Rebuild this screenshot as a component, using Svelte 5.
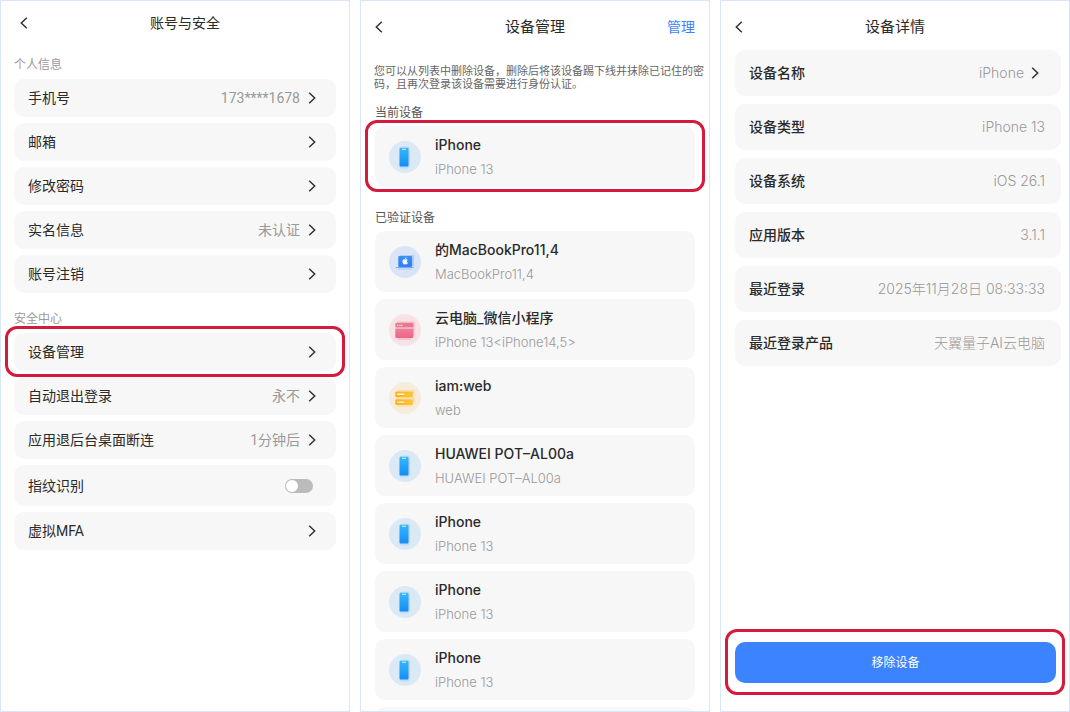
<script>
  const personal = [
    { label: '手机号', value: '173****1678' },
    { label: '邮箱' },
    { label: '修改密码' },
    { label: '实名信息', value: '未认证' },
    { label: '账号注销' }
  ];
  const security = [
    { label: '设备管理', marked: true },
    { label: '自动退出登录', value: '永不' },
    { label: '应用退后台桌面断连', value: '1分钟后' },
    { label: '指纹识别', toggle: true },
    { label: '虚拟MFA' }
  ];
  const current = [{ name: 'iPhone', model: 'iPhone 13', kind: 'phone' }];
  const verified = [
    { name: '的MacBookPro11,4', model: 'MacBookPro11,4', kind: 'laptop' },
    { name: '云电脑_微信小程序', model: 'iPhone 13<iPhone14,5>', kind: 'app' },
    { name: 'iam:web', model: 'web', kind: 'web' },
    { name: 'HUAWEI POT–AL00a', model: 'HUAWEI POT–AL00a', kind: 'phone' },
    { name: 'iPhone', model: 'iPhone 13', kind: 'phone' },
    { name: 'iPhone', model: 'iPhone 13', kind: 'phone' },
    { name: 'iPhone', model: 'iPhone 13', kind: 'phone' },
    { name: 'iPhone', model: 'iPhone 13', kind: 'phone' }
  ];
  const details = [
    { label: '设备名称', value: 'iPhone', editable: true },
    { label: '设备类型', value: 'iPhone 13' },
    { label: '设备系统', value: 'iOS 26.1' },
    { label: '应用版本', value: '3.1.1' },
    { label: '最近登录', value: '2025年11月28日 08:33:33' },
    { label: '最近登录产品', value: '天翼量子AI云电脑' }
  ];
  let fingerprint = $state(false);
</script>

{#snippet chevron()}
  <svg class="chevron" viewBox="0 0 8 12" aria-hidden="true"><path d="M1.2 .7 6.7 6 1.2 11.3" /></svg>
{/snippet}

{#snippet back()}
  <button class="back" aria-label="返回">
    <svg class="chevron" viewBox="0 0 8 12" aria-hidden="true"><path d="M6.8 .7 1.3 6l5.5 5.3" /></svg>
  </button>
{/snippet}

{#snippet settings(items)}
  <ul class="settings">
    {#each items as item}
      <li class:marked={item.marked}>
        {#if item.toggle}
          <label class="row tall">
            <span>{item.label}</span>
            <input class="switch" type="checkbox" role="switch" bind:checked={fingerprint} />
          </label>
        {:else}
          <button class="row">
            <span>{item.label}</span>
            {#if item.value}<span class="value">{item.value}</span>{/if}
            {@render chevron()}
          </button>
        {/if}
      </li>
    {/each}
  </ul>
{/snippet}

{#snippet devices(items, marked)}
  <ul class="devices">
    {#each items as d}
      <li class:marked>
        <button class="device">
          <svg class="badge" viewBox="0 0 32 32" aria-hidden="true">
            {#if d.kind === 'phone'}
              <circle cx="16" cy="16" r="16" fill="#dbe9f4" />
              <rect x="11.5" y="5.5" width="9.500" height="19" rx="1.5" fill="#8cc8f8" opacity=".3" />
              <rect x="10.5" y="8" width="10" height="19.500" rx="2" fill="#9dcbf5" opacity=".4" />
              <rect x="10.5" y="6.700" width="9" height="18.800" rx="1" fill="url(#phoneFill)" />
              <rect x="13" y="7.800" width="4" height="1" rx=".5" fill="#e4f5ff" />
            {:else if d.kind === 'laptop'}
              <circle cx="16" cy="16" r="16" fill="#d9e5f6" />
              <rect x="11" y="9" width="14" height="11" rx="1" fill="#93b9f8" opacity=".6" />
              <rect x="9" y="21" width="14" height="3" rx="1" fill="#a9c8f7" opacity=".5" />
              <rect x="9.3" y="10" width="13.7" height="11" rx="1" fill="url(#laptopFill)" />
              <path d="M6.4 21h18.8l-1 1.1H7.4z" fill="#78a9fa" />
              <path d="M16.2 13.7c-.8-.5-2-.5-2.5.4-.7 1.200.1 4.300 1.300 4.300.5 0 .7-.3 1.200-.3s.7.3 1.200.3c.7 0 1.300-1 1.500-1.800-1.200-.5-1.200-2.100-.1-2.700-.6-.8-1.700-.7-2.600-.2zM16 13.200c-.1-1 .6-1.800 1.600-2 .1 1.100-.6 1.900-1.600 2z" fill="#f2f7ff" />
            {:else if d.kind === 'app'}
              <circle cx="16" cy="16" r="16" fill="#f8e2e5" />
              <path d="M8 7.500h17.500V22H24V9H8z" fill="#f3a9b9" opacity=".7" />
              <rect x="9" y="23" width="13" height="3" rx="1" fill="#f5bcc7" opacity=".7" />
              <rect x="6.300" y="9" width="18" height="4.500" rx=".8" fill="#ee7592" />
              <path d="M6.300 14.500h18V23q0 1-1 1h-16q-1 0-1-1z" fill="url(#appFill)" />
              <path d="M8 11.300h1M9.700 11.300h1M11.400 11.300h2" stroke="#fff" stroke-width="1" />
            {:else}
              <circle cx="16" cy="16" r="16" fill="#f5ecdb" />
              <path d="M9 8h16.500v4H24V9.300H9zM24 14.500h1.500v5.500H24z" fill="#fbd58a" opacity=".7" />
              <rect x="7.500" y="15" width="16.500" height="2" fill="#fde0a2" opacity=".8" />
              <rect x="8" y="23" width="15" height="2" fill="#fde0a2" opacity=".7" />
              <rect x="6.300" y="9.500" width="17.700" height="5.700" rx="1" fill="url(#webFill)" />
              <rect x="6.300" y="17.300" width="17.700" height="5.700" rx="1" fill="url(#webFill)" />
              <path d="M8.700 12.300h6M8.700 20.100h6" stroke="#fff6df" stroke-width="1.400" stroke-linecap="round" />
            {/if}
          </svg>
          <span class="info">
            <span class="name">{d.name}</span>
            <span class="model">{d.model}</span>
          </span>
        </button>
      </li>
    {/each}
  </ul>
{/snippet}

<svg class="defs" width="0" height="0" aria-hidden="true">
  <defs>
    <linearGradient id="phoneFill" x1="0" y1="0" x2="0" y2="1"><stop stop-color="#37b8fb" /><stop offset="1" stop-color="#168cf5" /></linearGradient>
    <linearGradient id="laptopFill" x1="0" y1="0" x2="0" y2="1"><stop stop-color="#3d8df8" /><stop offset="1" stop-color="#2f7ff8" /></linearGradient>
    <linearGradient id="appFill" x1="0" y1="0" x2="0" y2="1"><stop stop-color="#ef7f99" /><stop offset="1" stop-color="#ec6585" /></linearGradient>
    <linearGradient id="webFill"><stop stop-color="#ffb01f" /><stop offset="1" stop-color="#fdc544" /></linearGradient>
  </defs>
</svg>

<main>
  <section class="screen account">
    <header>
      {@render back()}
      <h2>账号与安全</h2>
    </header>
    <h3>个人信息</h3>
    {@render settings(personal)}
    <h3>安全中心</h3>
    {@render settings(security)}
  </section>

  <section class="screen manage">
    <header>
      {@render back()}
      <h2>设备管理</h2>
      <button class="edit">管理</button>
    </header>
    <p>您可以从列表中删除设备，删除后将该设备踢下线并抹除已记住的密码，且再次登录该设备需要进行身份认证。</p>
    <h3>当前设备</h3>
    {@render devices(current, true)}
    <h3>已验证设备</h3>
    {@render devices(verified, false)}
  </section>

  <section class="screen detail">
    <header>
      {@render back()}
      <h2>设备详情</h2>
    </header>
    <dl>
      {#each details as d}
        <div>
          <dt>{d.label}</dt>
          <dd>{d.value}{#if d.editable}{@render chevron()}{/if}</dd>
        </div>
      {/each}
    </dl>
    <div class="action marked"><button>移除设备</button></div>
  </section>
</main>

<style>
  :global(body) {
    margin: 0;
    background: #fff;
  }
  main {
    display: grid;
    grid-template-columns: repeat(3, minmax(0, 1fr));
    gap: 10px;
    height: 100vh;
    color: #2a2a2a;
    font-family: Inter, "Noto Sans CJK SC", sans-serif;
    font-size: 14px;
    line-height: 20px;
  }
  .defs {
    position: absolute;
  }
  .screen {
    display: flex;
    flex-direction: column;
    box-sizing: border-box;
    min-height: 0;
    padding: 0 14px;
    border: 1px solid #d9e5fc;
    overflow: hidden;
  }
  button {
    margin: 0;
    padding: 0;
    border: 0;
    background: none;
    color: inherit;
    font: inherit;
    text-align: left;
    cursor: pointer;
  }
  h2,
  h3,
  p,
  ul,
  dl,
  dd {
    margin: 0;
    padding: 0;
  }
  ul {
    list-style: none;
  }
  header {
    display: grid;
    grid-template-columns: 40px 1fr 40px;
    align-items: center;
    flex: none;
    height: 52px;
  }
  h2 {
    font-size: 15px;
    font-weight: 400;
    text-align: center;
  }
  h3 {
    font-size: 12px;
    font-weight: 400;
    flex: none;
  }
  .back {
    display: flex;
    align-items: center;
    height: 24px;
  }
  .chevron {
    display: block;
    flex: none;
    width: 8px;
    height: 12px;
    fill: none;
    stroke: #333;
    stroke-width: 1.5;
  }
  .marked {
    position: relative;
  }
  .marked::before {
    content: "";
    position: absolute;
    inset: -7px -9px -6px;
    border: 3px solid #d51b3b;
    border-radius: 12px;
    pointer-events: none;
  }

  .account {
    padding: 0 13px;
    font-family: Roboto, "Noto Sans CJK SC", sans-serif;
  }
  .account header {
    grid-template-columns: 40px 1fr 20px;
    height: 44px;
    padding-left: 6px;
    padding-right: 6px;
  }
  .account h2 {
    font-size: 14px;
  }
  .account h3 {
    margin: 10px 0 4px;
    color: #999;
  }
  .settings {
    display: flex;
    flex-direction: column;
    gap: 6px;
  }
  .account .settings + h3 {
    margin-top: 16px;
  }
  .row {
    display: flex;
    align-items: center;
    box-sizing: border-box;
    width: 100%;
    height: 38px;
    padding: 0 20px 0 14px;
    border-radius: 10px;
    background: #f7f7f7;
  }
  .tall {
    height: 41px;
  }
  .row > :first-child {
    margin-right: auto;
  }
  .value {
    margin-right: 8px;
    color: #999;
  }
  .switch {
    appearance: none;
    display: flex;
    width: 28px;
    height: 14px;
    margin: 0 3px 0 0;
    border-radius: 7px;
    background: #bbb;
  }
  .switch::before {
    content: "";
    width: 12px;
    height: 12px;
    margin: 1px;
    border-radius: 50%;
    background: #fff;
  }
  .switch:checked {
    justify-content: flex-end;
    background: #3c83ff;
  }

  .edit {
    color: #3c83ff;
    text-align: right;
  }
  .manage p {
    margin: 12px -12px 0 -1px;
    color: #666;
    font-size: 11px;
    line-height: 13px;
  }
  .manage h3 {
    margin: 12px 0 3px;
    color: #555;
  }
  .manage .devices + h3 {
    margin-top: 21px;
  }
  .devices {
    display: flex;
    flex-direction: column;
    gap: 7px;
  }
  .device {
    display: flex;
    align-items: center;
    gap: 14px;
    width: 100%;
    height: 61px;
    padding: 0 14px;
    border-radius: 10px;
    background: #f7f7f7;
  }
  .devices .marked::before {
    inset: -6px -10px -5px;
  }
  .badge {
    flex: none;
    width: 32px;
    height: 32px;
  }
  .info {
    display: flex;
    flex-direction: column;
    min-width: 0;
    line-height: 24px;
  }
  .name {
    font-weight: 500;
  }
  .model {
    color: #999;
    font-size: 13px;
    font-weight: 300;
  }

  .detail {
    padding-right: 8px;
  }
  .detail header {
    height: 46px;
    margin-right: 6px;
    padding-top: 3px;
  }
  dl {
    display: flex;
    flex-direction: column;
    gap: 8px;
  }
  dl div {
    display: flex;
    align-items: center;
    justify-content: space-between;
    height: 46px;
    padding: 0 16px 0 14px;
    border-radius: 10px;
    background: #f7f7f7;
  }
  dt {
    font-weight: 500;
  }
  dd {
    display: flex;
    align-items: center;
    color: #999;
    font-weight: 300;
  }
  dd .chevron {
    margin: 0 6px 0 7px;
  }
  .action {
    margin: auto 5px 28px 0;
  }
  .action::before {
    inset: -13px -9px -12px -10px;
  }
  .action button {
    display: block;
    width: 100%;
    height: 41px;
    border-radius: 10px;
    background: #3c83ff;
    color: #fff;
    font-size: 12px;
    text-align: center;
  }
</style>
